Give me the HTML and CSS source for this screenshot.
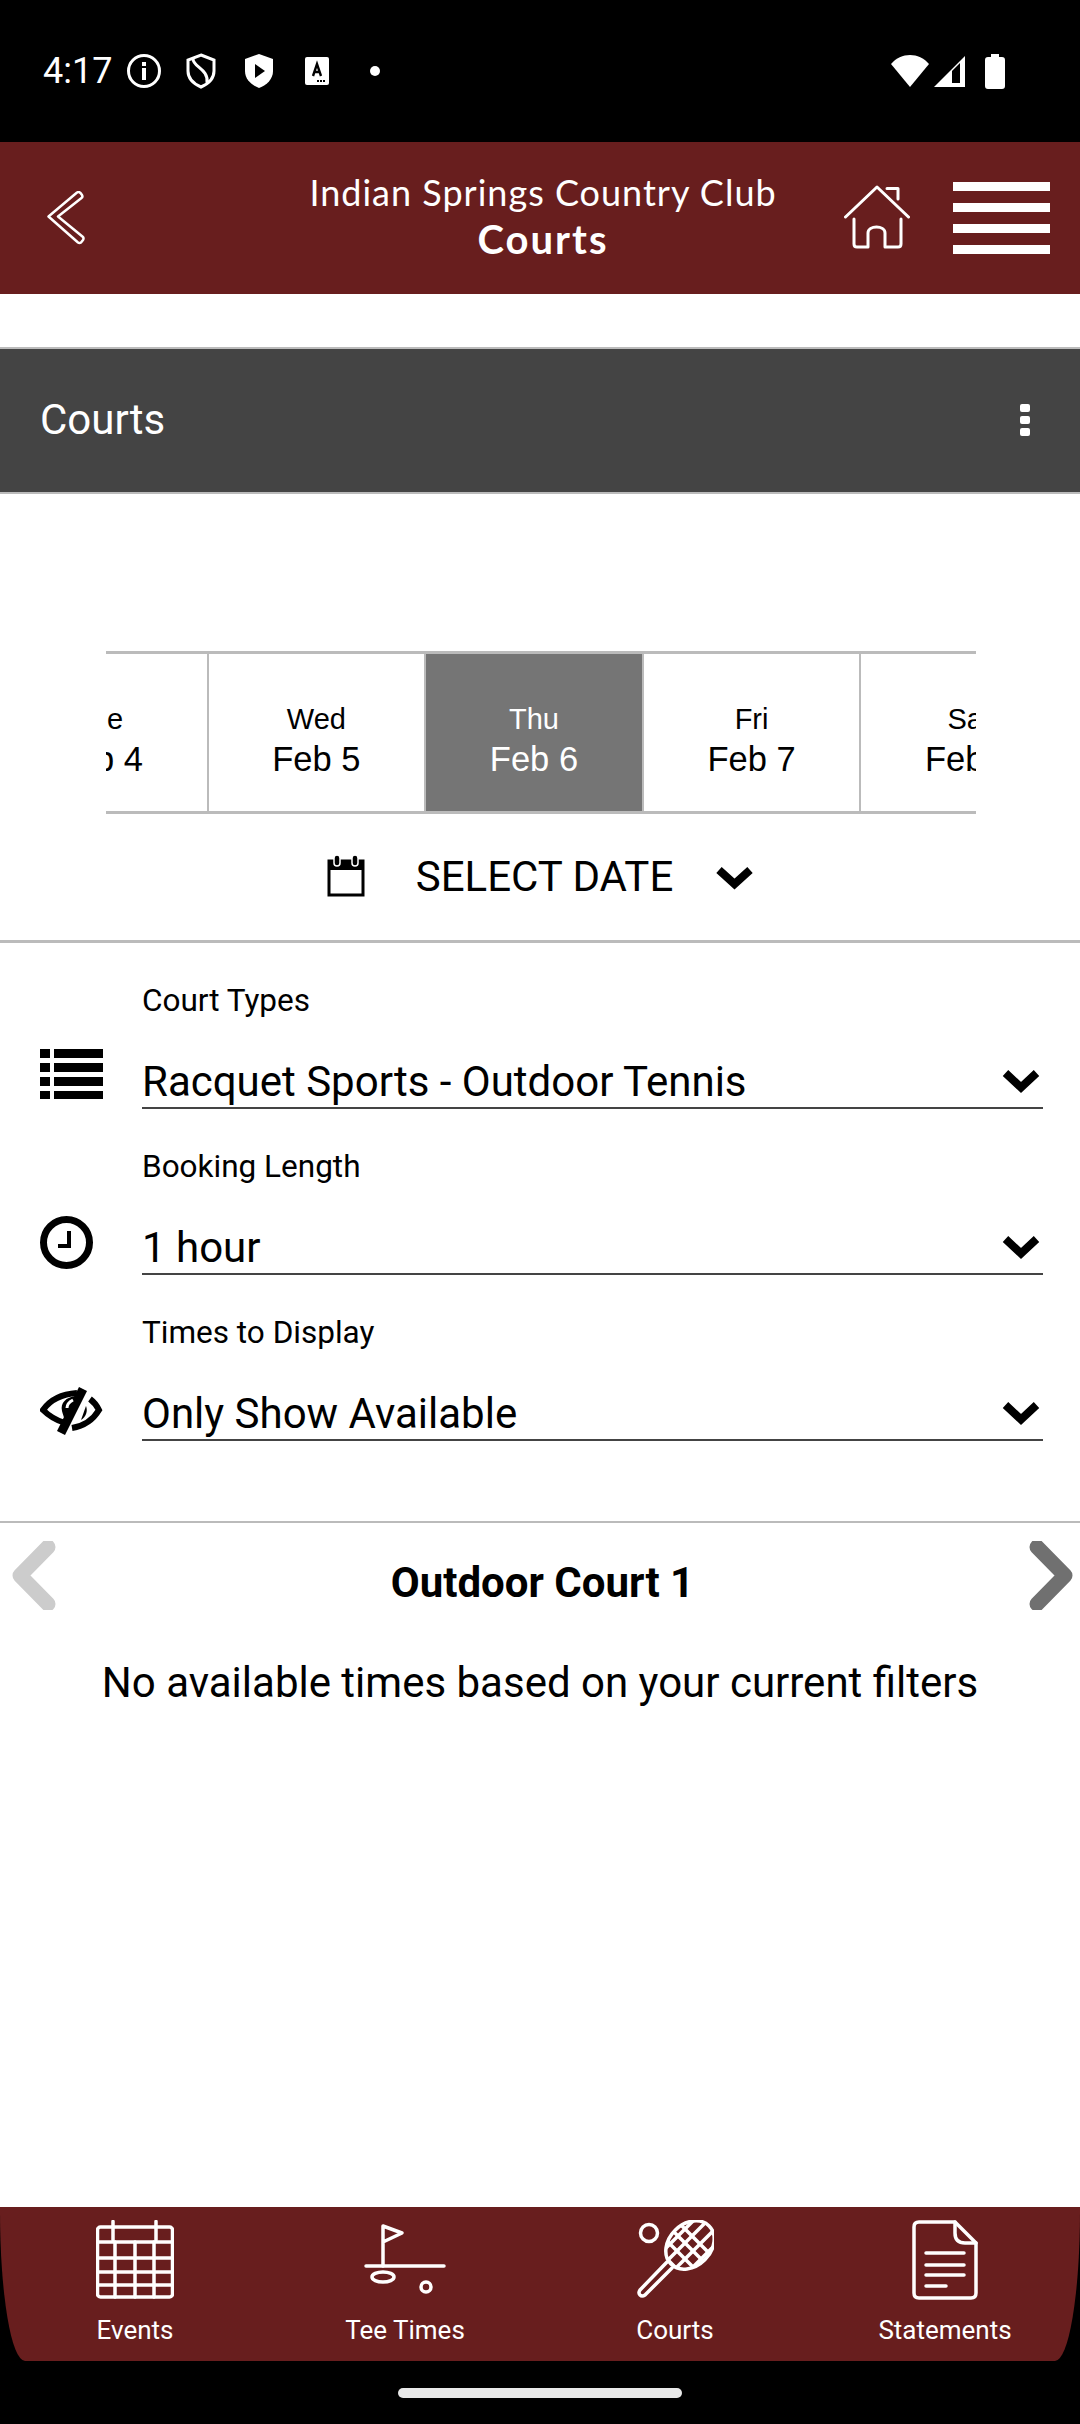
FILE: index.html
```html
<!DOCTYPE html>
<html lang="en">
<head>
    <meta charset="UTF-8">
    <meta name="viewport" content="width=device-width, initial-scale=1.0">
    <title>Courts</title>
    <link rel="stylesheet" href="styles.css">
</head>
<body>
    <div class="screen">
        <div class="status-bar">
            <span class="clock">4:17</span>
            <svg class="status-icon info" width="36" height="36" viewBox="0 0 36 36"><circle cx="18" cy="18" r="15.5" fill="none" stroke="#fff" stroke-width="3"/><rect x="16" y="15" width="4" height="12" fill="#fff"/><rect x="16" y="9" width="4" height="4" fill="#fff"/></svg>
            <svg class="status-icon vpn" width="32" height="36" viewBox="0 0 32 36"><path d="M16 2 L29 7 V18 C29 26 23 31 16 34 C9 31 3 26 3 18 V7 Z" fill="none" stroke="#fff" stroke-width="3"/><path d="M8 6 C8 14 24 16 22 30" fill="none" stroke="#fff" stroke-width="3"/></svg>
            <svg class="status-icon play" width="30" height="36" viewBox="0 0 30 36"><path d="M15 1 L29 6 V18 C29 26 23 32 15 35 C7 32 1 26 1 18 V6 Z" fill="#fff"/><path d="M11 11 L21 18 L11 25 Z" fill="#000"/></svg>
            <svg class="status-icon translate" width="24" height="28" viewBox="0 0 24 28"><rect width="24" height="28" rx="2" fill="#fff"/><path d="M8 19 L12 7 L16 19 M9.5 15 H14.5" fill="none" stroke="#000" stroke-width="2.4"/><rect x="12" y="23" width="2" height="2" fill="#000"/><rect x="15" y="23" width="2" height="2" fill="#000"/><rect x="18" y="23" width="2" height="2" fill="#000"/></svg>
            <span class="status-dot"></span>
            <span class="status-right">
                <svg width="38" height="32" viewBox="0 0 38 32"><path d="M0 9 C10 -3 28 -3 38 9 L19 32 Z" fill="#fff"/></svg>
                <svg class="signal" width="33" height="33" viewBox="0 0 33 33"><path d="M32 1 V32 H1 Z" fill="#fff"/><path d="M19 16 L27 8 V28 H19 Z" fill="#000"/></svg>
                <svg class="battery" width="20" height="35" viewBox="0 0 20 35"><path d="M6 0 H14 V3 H17 Q20 3 20 6 V32 Q20 35 17 35 H3 Q0 35 0 32 V6 Q0 3 3 3 H6 Z" fill="#fff"/></svg>
            </span>
        </div>

        <header class="app-header">
            <svg class="back-icon" width="40" height="54" viewBox="0 0 40 54"><path d="M1.5 25.5 L30 1.5 Q32 0.5 33.5 2 L35 4 Q36 6 34.5 7 L11 25.5 L36 46 Q37 47.5 36 49 L34 51.5 Q32.5 52.5 31 51.5 Z" fill="none" stroke="#fff" stroke-width="2.5" stroke-linejoin="round"/></svg>
            <div class="app-title">
                <div class="club-name">Indian Springs Country Club</div>
                <div class="page-name">Courts</div>
            </div>
            <svg class="home-icon" width="66" height="66" viewBox="0 0 66 66"><g fill="none" stroke="#fff" stroke-width="3" stroke-linecap="round" stroke-linejoin="round"><path d="M1.5 32 L33 2 L64.5 32"/><path d="M43 3.5 H54 V14"/><path d="M10 34 V59 Q10 62 13 62 H24 V48 C24 40 41 40 41 48 V62 H54 Q57 62 57 59 V34"/></g></svg>
            <div class="menu-icon"><span></span><span></span><span></span><span></span></div>
        </header>

        <main class="content">
            <div class="title-bar">
                <span class="title-text">Courts</span>
                <div class="more-icon"><span></span><span></span><span></span></div>
            </div>

            <div class="date-strip">
                <div class="date-track">
                    <div class="date-cell"><span class="day">Tue</span><span class="date">Feb 4</span></div>
                    <div class="date-cell"><span class="day">Wed</span><span class="date">Feb 5</span></div>
                    <div class="date-cell active"><span class="day">Thu</span><span class="date">Feb 6</span></div>
                    <div class="date-cell"><span class="day">Fri</span><span class="date">Feb 7</span></div>
                    <div class="date-cell"><span class="day">Sat</span><span class="date">Feb 8</span></div>
                </div>
            </div>

            <div class="select-date">
                <svg width="38" height="42" viewBox="0 0 38 42"><path d="M2 6 H36 V40 H2 Z" fill="none" stroke="#000" stroke-width="3"/><path d="M1 5 H37 V15 H1 Z" fill="#000"/><rect x="7" y="0" width="6" height="11" rx="3" fill="#000" stroke="#fff" stroke-width="1.5"/><rect x="25" y="0" width="6" height="11" rx="3" fill="#000" stroke="#fff" stroke-width="1.5"/></svg>
                <span class="select-text">SELECT DATE</span>
                <svg class="chevron" width="39" height="24" viewBox="0 0 39 24"><path d="M4 4 L19.5 18 L35 4" fill="none" stroke="#000" stroke-width="8"/></svg>
            </div>

            <div class="filters">
                <div class="filter">
                    <svg class="filter-icon" width="64" height="60" viewBox="0 0 64 60"><path d="M0 6 H10 V15 H0 Z M14 6 H63 V15 H14 Z M0 20 H10 V29 H0 Z M14 20 H63 V29 H14 Z M0 34 H10 V43 H0 Z M14 34 H63 V43 H14 Z M0 48 H10 V56 H0 Z M14 48 H63 V56 H14 Z" fill="#000"/></svg>
                    <div class="field">
                        <div class="field-label">Court Types</div>
                        <div class="field-value"><span>Racquet Sports - Outdoor Tennis</span><svg width="38" height="25" viewBox="0 0 38 25"><path d="M3.5 4 L19 18.5 L34.5 4" fill="none" stroke="#000" stroke-width="8"/></svg></div>
                    </div>
                </div>
                <div class="filter">
                    <svg class="filter-icon" width="64" height="60" viewBox="0 0 64 60"><circle cx="26.5" cy="33.5" r="23" fill="none" stroke="#000" stroke-width="7"/><path d="M18 37 H29 V22" fill="none" stroke="#000" stroke-width="4"/></svg>
                    <div class="field">
                        <div class="field-label">Booking Length</div>
                        <div class="field-value"><span>1 hour</span><svg width="38" height="25" viewBox="0 0 38 25"><path d="M3.5 4 L19 18.5 L34.5 4" fill="none" stroke="#000" stroke-width="8"/></svg></div>
                    </div>
                </div>
                <div class="filter">
                    <svg class="filter-icon" width="64" height="60" viewBox="0 0 64 60"><g fill="none" stroke="#000" stroke-width="6"><path d="M25 48 C15 45 8 40 3 35 C10 25 22 19 37 18"/><path d="M50 24 C54 27 57 31 59 35 C53 45 44 51 32 53"/></g><path d="M22 36 C20 28 26 22 36 21 L26 46 C24 43 23 40 22 36 Z" fill="#000"/><path d="M41 45 L46 31 C48 36 46 42 41 45 Z" fill="#000"/><path d="M43 14 L21 58" stroke="#000" stroke-width="9"/><path d="M27 33 C27 29 29 27 33 25" fill="none" stroke="#fff" stroke-width="3"/></svg>
                    <div class="field">
                        <div class="field-label">Times to Display</div>
                        <div class="field-value"><span>Only Show Available</span><svg width="38" height="25" viewBox="0 0 38 25"><path d="M3.5 4 L19 18.5 L34.5 4" fill="none" stroke="#000" stroke-width="8"/></svg></div>
                    </div>
                </div>
            </div>

            <div class="court-head">
                <svg width="45" height="69" viewBox="0 0 45 69"><path d="M36 6 L8 34.5 L36 63" fill="none" stroke="#ccc" stroke-width="15" stroke-linejoin="round" stroke-linecap="round"/></svg>
                <h2 class="court-name">Outdoor Court 1</h2>
                <svg width="45" height="69" viewBox="0 0 45 69"><path d="M9 6 L37 34.5 L9 63" fill="none" stroke="#707070" stroke-width="15" stroke-linejoin="round" stroke-linecap="round"/></svg>
            </div>
            <p class="no-times">No available times based on your current filters</p>
        </main>

        <footer class="tab-bar-wrap">
            <nav class="tab-bar">
                <div class="tab">
                    <svg width="78" height="80" viewBox="0 0 78 80"><g fill="none" stroke="#fff" stroke-width="3.5" stroke-linecap="round" stroke-linejoin="round"><rect x="1.5" y="7" width="75" height="70" rx="3"/><path d="M17 1.5 V20 M60 1.5 V20"/><path d="M2 22 H76 M2 38 H76 M2 52 H76 M2 65 H76"/><path d="M19 22 V77 M39 22 V77 M58 22 V77"/></g></svg>
                    <span class="tab-label">Events</span>
                </div>
                <div class="tab">
                    <svg width="82" height="80" viewBox="0 0 82 80"><g fill="none" stroke="#fff" stroke-width="3.5" stroke-linecap="round" stroke-linejoin="round"><path d="M19 46 V6 L38 13 L19 22"/><path d="M2 46 H80"/><ellipse cx="19" cy="57" rx="11" ry="5"/><circle cx="62" cy="67" r="5"/></g></svg>
                    <span class="tab-label">Tee Times</span>
                </div>
                <div class="tab">
                    <svg width="78" height="80" viewBox="0 0 78 80">
                        <defs><clipPath id="racketHead"><ellipse cx="54" cy="25" rx="21" ry="27" transform="rotate(45 54 25)"/></clipPath></defs>
                        <g fill="none" stroke="#fff" stroke-width="3.5" stroke-linecap="round" stroke-linejoin="round">
                            <circle cx="13" cy="13" r="8.5"/>
                            <ellipse cx="54" cy="25" rx="21" ry="27" transform="rotate(45 54 25)"/>
                            <path d="M31 42 L4 70 Q2 73 4 75 Q6 77 9 75 L36 48"/>
                            <g clip-path="url(#racketHead)">
                                <path d="M20 10 L70 60 M30 4 L80 54 M42 2 L88 48 M10 18 L60 68"/>
                                <path d="M88 0 L38 50 M76 -4 L26 46 M64 -6 L18 40 M94 10 L48 56"/>
                            </g>
                        </g>
                    </svg>
                    <span class="tab-label">Courts</span>
                </div>
                <div class="tab">
                    <svg width="66" height="80" viewBox="0 0 66 80"><g fill="none" stroke="#fff" stroke-width="3.5" stroke-linecap="round" stroke-linejoin="round"><path d="M43 2 H7 Q2 2 2 7 V73 Q2 78 7 78 H59 Q64 78 64 73 V23 Z"/><path d="M43 2 V13 Q43 23 53 23 H64"/><path d="M14 33 H52 M14 45 H52 M14 55 H52 M14 66 H34"/></g></svg>
                    <span class="tab-label">Statements</span>
                </div>
            </nav>
            <div class="gesture-bar"><span></span></div>
        </footer>
    </div>
</body>
</html>
```

FILE: styles.css
```css
* {
    box-sizing: border-box;
}
body {
    margin: 0;
    background-color: #000;
    font-family: Roboto, Arial, sans-serif;
    color: #000;
}
.screen {
    display: flex;
    flex-direction: column;
    width: 1080px;
    height: 2424px;
    overflow: hidden;
}

/* status bar */
.status-bar {
    display: flex;
    align-items: center;
    height: 142px;
    padding: 0 75px 0 43px;
    background-color: #000;
    color: #fff;
}
.clock {
    font-size: 36px;
    width: 83px;
}
.status-icon {
    flex: none;
}
.vpn {
    margin-left: 23px;
}
.play {
    margin-left: 27px;
}
.translate {
    margin-left: 31px;
}
.status-dot {
    width: 10px;
    height: 10px;
    margin-left: 41px;
    border-radius: 50%;
    background-color: #fff;
}
.status-right {
    display: flex;
    align-items: center;
    margin-left: auto;
}
.signal {
    margin-left: 4px;
}
.battery {
    margin-left: 19px;
}

/* app header */
.app-header {
    display: flex;
    align-items: center;
    flex: none;
    height: 152px;
    padding-left: 47px;
    background-color: #681e1e;
    color: #fff;
}
.back-icon {
    flex: none;
    margin-right: 203px;
}
.app-title {
    width: 506px;
    text-align: center;
}
.club-name {
    font-family: Lato, sans-serif;
    font-size: 36px;
    letter-spacing: 1px;
    line-height: 46px;
    margin-top: -4px;
}
.page-name {
    font-family: Lato, sans-serif;
    font-size: 40px;
    font-weight: 700;
    letter-spacing: 2px;
    line-height: 48px;
}
.home-icon {
    flex: none;
    margin-left: 48px;
}
.menu-icon {
    display: flex;
    flex-direction: column;
    gap: 12px;
    width: 97px;
    margin-left: 43px;
}
.menu-icon span {
    height: 9px;
    background-color: #fff;
}

/* main content */
.content {
    flex: 1;
    padding-top: 53px;
    background-color: #fff;
}
.title-bar {
    display: flex;
    align-items: center;
    justify-content: space-between;
    height: 147px;
    padding: 0 50px 2px 40px;
    background-color: #444;
    border-top: 2px solid #bbb;
    border-bottom: 2px solid #bbb;
    color: #fff;
}
.title-text {
    font-size: 42px;
}
.more-icon {
    display: flex;
    flex-direction: column;
    gap: 4px;
}
.more-icon span {
    width: 10px;
    height: 8px;
    border-radius: 2px;
    background-color: #fff;
}

/* date strip */
.date-strip {
    width: 870px;
    height: 163px;
    margin: 157px 0 0 106px;
    overflow: hidden;
    border-top: 3px solid #bbb;
    border-bottom: 3px solid #bbb;
}
.date-track {
    display: flex;
    height: 100%;
    margin-left: -115px;
}
.date-cell {
    display: flex;
    flex-direction: column;
    align-items: center;
    justify-content: center;
    flex: none;
    width: 217.6px;
    padding-top: 12px;
    border-right: 2px solid #bbb;
}
.date-cell.active {
    background-color: #757575;
    color: #fff;
}
.day {
    font-family: "Liberation Sans", Arial, sans-serif;
    font-size: 29px;
    line-height: 40px;
}
.date {
    font-family: "Liberation Sans", Arial, sans-serif;
    font-size: 34.5px;
    line-height: 40px;
}
.select-date {
    display: flex;
    align-items: center;
    justify-content: center;
    height: 129px;
    padding: 0 0 2px 1px;
    border-bottom: 3px solid #bbb;
}
.select-text {
    margin: 0 42px 0 51px;
    font-size: 42px;
}
.chevron {
    margin-top: 4px;
}

/* filters */
.filter {
    display: flex;
    align-items: flex-end;
    height: 166px;
    padding-left: 40px;
}
.filter-icon {
    flex: none;
    margin: 0 38px 6px 0;
}
.field {
    width: 901px;
}
.field-label {
    font-size: 31.5px;
    line-height: 34px;
    margin-bottom: 47px;
}
.field-value {
    display: flex;
    align-items: center;
    justify-content: space-between;
    height: 44px;
    padding: 0 3px 9px 0;
    border-bottom: 2px solid #444;
    font-size: 42px;
}

/* court results */
.court-head {
    display: flex;
    align-items: center;
    justify-content: space-between;
    height: 96px;
    margin-top: 80px;
    padding: 10px 7px 0 12px;
    border-top: 2px solid #bbb;
}
.court-name {
    margin: 14px 0 0;
    font-size: 42px;
    font-weight: 700;
}
.no-times {
    margin: 41px 0 0;
    font-size: 42px;
    text-align: center;
}

/* bottom tabs */
.tab-bar-wrap {
    flex: none;
    height: 217px;
    background-color: #000;
}
.tab-bar {
    display: grid;
    grid-template-columns: repeat(4, 1fr);
    height: 154px;
    background-color: #681e1e;
    border-radius: 0 0 25px 25px / 0 0 150px 150px;
    color: #fff;
}
.tab {
    display: flex;
    flex-direction: column;
    align-items: center;
    padding-top: 13px;
}
.tab-label {
    margin-top: 15px;
    font-size: 26px;
    line-height: 30px;
}
.gesture-bar {
    display: flex;
    justify-content: center;
    padding-top: 27px;
}
.gesture-bar span {
    width: 284px;
    height: 10px;
    border-radius: 5px;
    background-color: #e8e8e8;
}
```
